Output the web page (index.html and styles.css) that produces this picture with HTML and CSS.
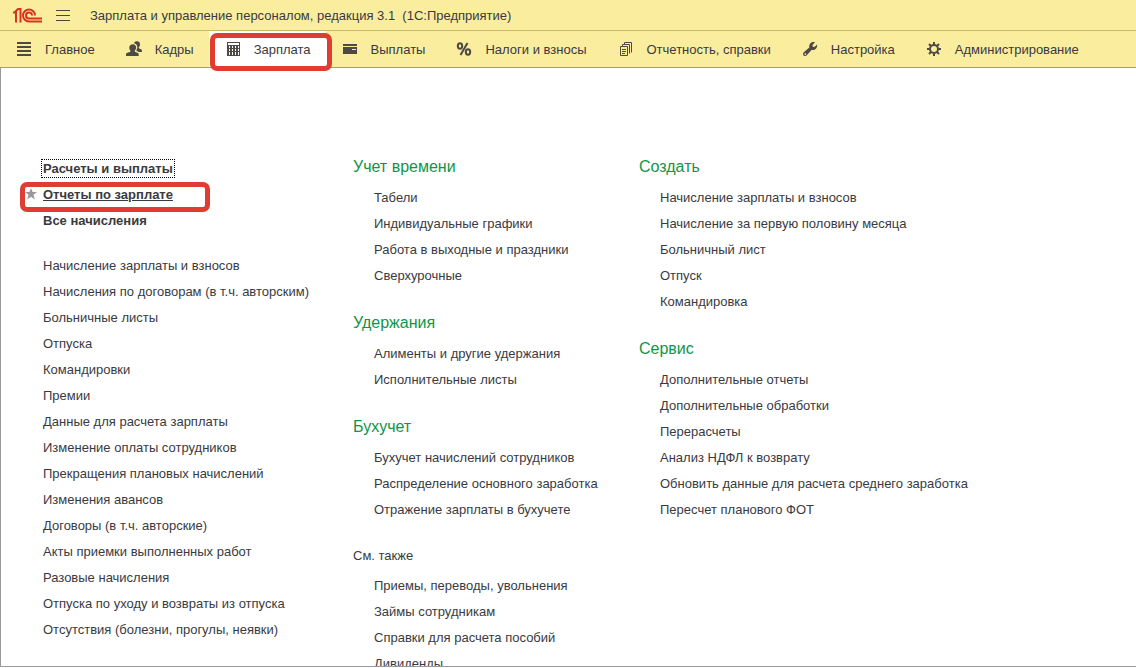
FILE: index.html
```html
<!DOCTYPE html>
<html lang="ru">
<head>
<meta charset="utf-8">
<title>Зарплата и управление персоналом, редакция 3.1</title>
<link rel="stylesheet" href="styles.css">
</head>
<body>
<header class="titlebar">
  <svg class="logo" viewBox="0 0 30 15" aria-label="1С">
    <path d="M0 4.500H3V14.500M1.500 4.500L5 1H7.500V14.500" />
    <path d="M22 7.500A6 6 0 1 0 16 13.500H29M19 7.500A3 3 0 1 0 16 10.500H29" />
  </svg>
  <button class="menu-button" type="button" aria-label="Главное меню">
    <svg viewBox="0 0 14 12"><path d="M0 1.500H14M0 6.500H14M0 11.500H14" /></svg>
  </button>
  <h1 class="app-title">Зарплата и управление персоналом, редакция 3.1&nbsp; (1С:Предприятие)</h1>
</header>
<nav class="sections">
  <a class="section" href="#"><svg class="icon" viewBox="0 0 16 16"><path d="M1 1h14v2H1zM1 5h14v2H1zM1 9h14v2H1zM1 13h14v2H1z"/></svg>Главное</a>
  <a class="section" href="#"><svg class="icon" viewBox="0 0 16 16"><path d="M8 2.200C8.500.8 9.500.2 11 .2c2 0 3 1.300 3 3 0 1.400-.5 2.300-1.200 3v1l2.600 1.200c.5.300.6 1 .6 2.600h-3.500c-.5-.8-1.500-1.200-2.400-1.600.8-1 1.200-2 1.200-3.400C11.300 4 10 2.500 8 2.200z"/><path d="M6.800 3.200c2.200 0 3.300 1.300 3.300 3.200 0 1.400-.5 2.400-1.300 3.100v1.200l3.200 1.300c.5.300.7 1 .7 3H0c0-2 .1-2.700.7-3l3.700-1.300V9.500C3.700 8.800 3.300 7.800 3.300 6.400c0-1.900 1.300-3.200 3.500-3.200z"/></svg>Кадры</a>
  <a class="section section-active" href="#" aria-current="page"><svg class="icon" viewBox="0 0 16 16"><path fill-rule="evenodd" d="M2 1h13v14H2zM3 2v2h11V2zM4 5v2h1V5zm3 0v2h1V5zm3 0v2h1V5zm3 0v2h1V5zM4 8v2h1V8zm3 0v2h1V8zm3 0v2h1V8zm3 0v2h1V8zM4 11v3h1v-3zm3 0v3h1v-3zm3 0v3h1v-3zm3 0v3h1v-3z"/></svg>Зарплата</a>
  <a class="section" href="#"><svg class="icon" viewBox="0 0 16 16"><path fill-rule="evenodd" d="M1 3h14v2H1zM1 6h14v7H1zM10 8v1h4V8z"/></svg>Выплаты</a>
  <a class="section" href="#"><svg class="icon icon-line icon-percent" viewBox="0 0 16 16"><ellipse cx="4" cy="5" rx="2.200" ry="2.700"/><ellipse cx="12" cy="11" rx="2.200" ry="2.700"/><path d="M11.500 2L4.500 14"/></svg>Налоги и взносы</a>
  <a class="section" href="#"><svg class="icon icon-line" viewBox="0 0 16 16"><path d="M2.500 5.500h7v9h-7zM4.500 5V3.500h7v9M6.500 3V1.500h7v10M4 8.500h4M4 10.500h4M4 12.500h3"/></svg>Отчетность, справки</a>
  <a class="section" href="#"><svg class="icon" viewBox="0 0 16 16"><path fill-rule="evenodd" d="M13 1.300L10.500 4l.3 1.700 1.700.3L15 3.500c.6 2.500-.8 5.200-3.500 5.400-.7.100-1.200 0-1.700-.2L4.800 14.300c-.8.900-2.300 1-3.200.2-.8-.8-.8-2.300.2-3.200l5.500-4.800C6.700 3.500 9 .3 13 1.300zM3.200 12.200a.8.800 0 1 0 .1 0z"/></svg>Настройка</a>
  <a class="section" href="#"><svg class="icon icon-gear" viewBox="0 0 16 16"><circle cx="8" cy="8" r="4"/><path d="M8 1v2.500M8 12.500V15M1 8h2.500M12.500 8H15M3 3l2 2M11 11l2 2M13 3l-2 2M5 11l-2 2"/></svg>Администрирование</a>
</nav>
<main class="panel">
  <div class="column column-main">
    <ul class="links links-strong">
      <li><a class="focused" href="#">Расчеты и выплаты</a></li>
      <li class="marked"><svg class="star" viewBox="0 0 12 12"><path d="M6 0l1.600 4H12L8.500 6.800 9.800 11.500 6 8.700 2.200 11.500 3.500 6.800 0 4h4.400z"/></svg><a href="#">Отчеты по зарплате</a></li>
      <li><a href="#">Все начисления</a></li>
    </ul>
    <ul class="links">
      <li><a href="#">Начисление зарплаты и взносов</a></li>
      <li><a href="#">Начисления по договорам (в т.ч. авторским)</a></li>
      <li><a href="#">Больничные листы</a></li>
      <li><a href="#">Отпуска</a></li>
      <li><a href="#">Командировки</a></li>
      <li><a href="#">Премии</a></li>
      <li><a href="#">Данные для расчета зарплаты</a></li>
      <li><a href="#">Изменение оплаты сотрудников</a></li>
      <li><a href="#">Прекращения плановых начислений</a></li>
      <li><a href="#">Изменения авансов</a></li>
      <li><a href="#">Договоры (в т.ч. авторские)</a></li>
      <li><a href="#">Акты приемки выполненных работ</a></li>
      <li><a href="#">Разовые начисления</a></li>
      <li><a href="#">Отпуска по уходу и возвраты из отпуска</a></li>
      <li><a href="#">Отсутствия (болезни, прогулы, неявки)</a></li>
    </ul>
  </div>
  <div class="column column-middle">
    <section class="group">
      <h2>Учет времени</h2>
      <ul class="links">
        <li><a href="#">Табели</a></li>
        <li><a href="#">Индивидуальные графики</a></li>
        <li><a href="#">Работа в выходные и праздники</a></li>
        <li><a href="#">Сверхурочные</a></li>
      </ul>
    </section>
    <section class="group">
      <h2>Удержания</h2>
      <ul class="links">
        <li><a href="#">Алименты и другие удержания</a></li>
        <li><a href="#">Исполнительные листы</a></li>
      </ul>
    </section>
    <section class="group">
      <h2>Бухучет</h2>
      <ul class="links">
        <li><a href="#">Бухучет начислений сотрудников</a></li>
        <li><a href="#">Распределение основного заработка</a></li>
        <li><a href="#">Отражение зарплаты в бухучете</a></li>
      </ul>
    </section>
    <section class="group">
      <h2 class="see-also">См. также</h2>
      <ul class="links">
        <li><a href="#">Приемы, переводы, увольнения</a></li>
        <li><a href="#">Займы сотрудникам</a></li>
        <li><a href="#">Справки для расчета пособий</a></li>
        <li><a href="#">Дивиденды</a></li>
      </ul>
    </section>
  </div>
  <div class="column column-last">
    <section class="group">
      <h2>Создать</h2>
      <ul class="links">
        <li><a href="#">Начисление зарплаты и взносов</a></li>
        <li><a href="#">Начисление за первую половину месяца</a></li>
        <li><a href="#">Больничный лист</a></li>
        <li><a href="#">Отпуск</a></li>
        <li><a href="#">Командировка</a></li>
      </ul>
    </section>
    <section class="group">
      <h2>Сервис</h2>
      <ul class="links">
        <li><a href="#">Дополнительные отчеты</a></li>
        <li><a href="#">Дополнительные обработки</a></li>
        <li><a href="#">Перерасчеты</a></li>
        <li><a href="#">Анализ НДФЛ к возврату</a></li>
        <li><a href="#">Обновить данные для расчета среднего заработка</a></li>
        <li><a href="#">Пересчет планового ФОТ</a></li>
      </ul>
    </section>
  </div>
</main>
</body>
</html>
```
FILE: styles.css
```css
*, *::after { box-sizing: border-box; }

body {
  display: flex;
  flex-direction: column;
  height: 100vh;
  margin: 0;
  padding-bottom: 1px;
  background: #fff;
  color: #3a3a3e;
  font: 13px/26px "Liberation Sans", Arial, sans-serif;
}

a { color: inherit; text-decoration: none; }
ul { margin: 0; padding: 0; list-style: none; }

.titlebar {
  display: flex;
  align-items: center;
  flex: none;
  height: 31px;
  padding: 0 13px;
  background: #fbed9e;
  border-bottom: 1px solid #c9b866;
}
.logo { width: 30px; height: 15px; fill: none; stroke: #d9331f; stroke-width: 2; }
.menu-button {
  display: flex;
  margin: 0 20px 0 13px;
  padding: 0;
  background: none;
  border: 0;
}
.menu-button svg { width: 14px; height: 12px; stroke: #4d4838; }
.app-title { margin: 0; padding-top: 2px; font-size: 13px; font-weight: normal; }

.sections {
  display: flex;
  flex: none;
  height: 37px;
  background: #fbed9e;
  border-bottom: 1px solid #a49c72;
}
.section {
  position: relative;
  display: flex;
  align-items: center;
  gap: 13px;
  padding: 2px 15px 0 16px;
  white-space: nowrap;
}
.section-active { background: #fff; }
.section-active::after {
  content: "";
  position: absolute;
  inset: 2px -6px -4px 1px;
  border: 5px solid #e03c31;
  border-radius: 7px;
  background: linear-gradient(#fff, #fff) right / 6px 100% no-repeat;
}
.icon { flex: none; width: 16px; height: 16px; margin-bottom: 2px; fill: #4d4a45; }
.icon-line { fill: none; stroke: #4d4a45; }
.icon-percent { stroke-width: 2; }
.icon-gear { fill: none; stroke: #4d4a45; stroke-width: 2; }

.panel {
  display: flex;
  flex: 1;
  min-height: 0;
  padding: 86px 20px 0 42px;
  overflow: hidden;
  border: solid #9a9a9a;
  border-width: 0 0 1px 1px;
}
.column { flex: none; white-space: nowrap; }
.column-main { width: 310px; padding-top: 2px; }
.column-middle { width: 286px; }

.links-strong { margin-bottom: 19px; font-weight: bold; }
.focused { outline: 1px dotted #000; outline-offset: 1px; }
.marked { position: relative; text-decoration: underline; }
.marked::after {
  content: "";
  position: absolute;
  inset: 0 auto -4px -23px;
  width: 190px;
  border: 5px solid #e03c31;
  border-radius: 7px;
}
.star { position: absolute; top: 6px; left: -18px; width: 12px; height: 12px; fill: #999; }

.group { margin-bottom: 21px; }
.group h2 { margin: 0 0 5px; color: #0e9648; font-size: 16px; font-weight: normal; }
.group .see-also { color: inherit; font-size: 13px; line-height: 24px; }
.group .links { padding-left: 21px; }
```
